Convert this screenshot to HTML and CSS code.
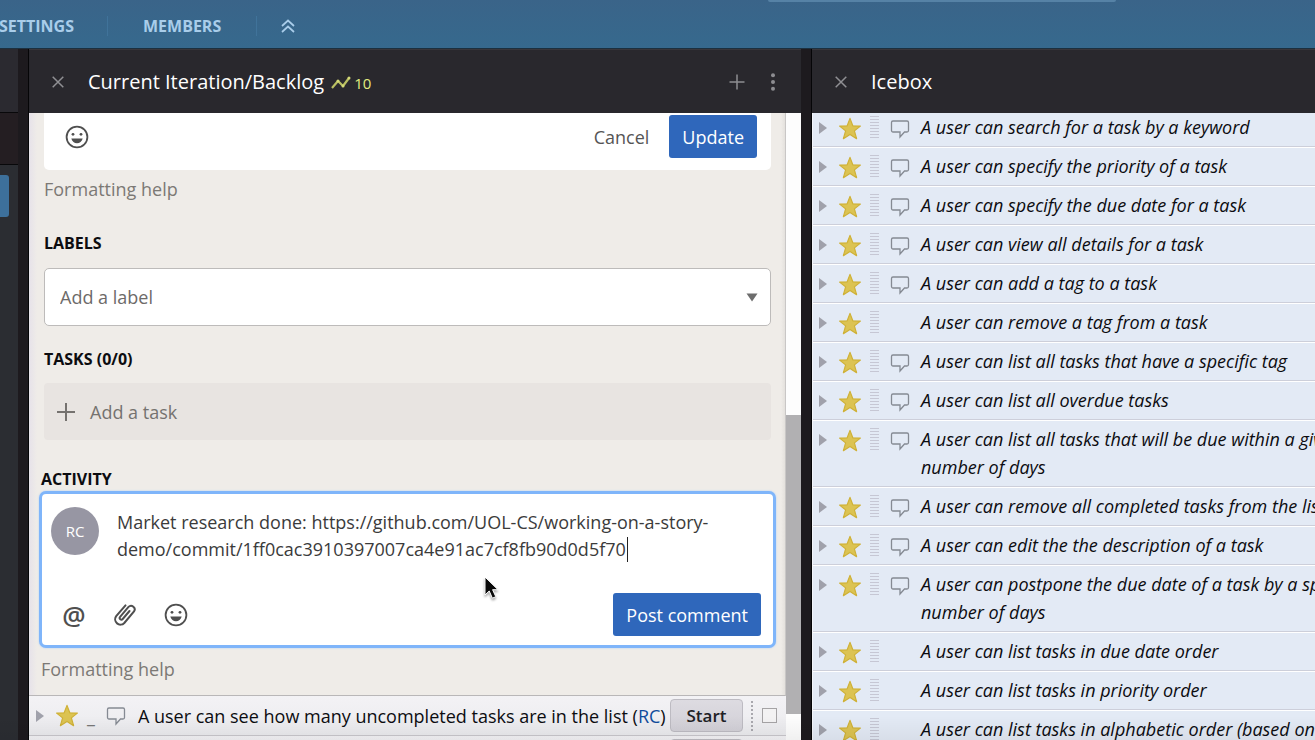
FILE: index.html
```html
<!DOCTYPE html>
<html lang="en">
<head>
<meta charset="utf-8">
<title>Current Iteration/Backlog</title>
<link rel="stylesheet" href="styles.css">
</head>
<body>
<svg class="defs" aria-hidden="true">
  <symbol id="star" viewBox="0 0 24 24"><path d="M12 1.400l2.800 7.400 7.600.300-6 4.800 2.200 7.800-6.600-4.300-6.600 4.300 2.200-7.800-6-4.800 7.600-.300z" fill="#dcc352" stroke="#cfb137" stroke-width="1.200" stroke-linejoin="round"/></symbol>
  <symbol id="bubble" viewBox="0 0 20 20"><path d="M3 2h14a1.500 1.500 0 0 1 1.500 1.500v8A1.500 1.500 0 0 1 17 13h-2.500L10 18v-5H3a1.500 1.500 0 0 1-1.500-1.500v-8A1.500 1.500 0 0 1 3 2z" fill="none" stroke="#858a93" stroke-width="1.300"/></symbol>
  <symbol id="caret" viewBox="0 0 8 12"><path d="M0 0l8 6-8 6z" fill="#a0a1ab"/></symbol>
  <symbol id="smile" viewBox="0 0 24 24"><circle cx="12" cy="12" r="10.400" fill="none" stroke="#4f4f4f" stroke-width="1.800"/><circle cx="8" cy="9.300" r="1.400" fill="#4f4f4f"/><circle cx="16" cy="9.300" r="1.400" fill="#4f4f4f"/><path d="M6.300 13.500h11.400c-.8 3-3 4.700-5.700 4.700s-4.900-1.700-5.700-4.700z" fill="#4f4f4f"/></symbol>
  <symbol id="close" viewBox="0 0 12 12"><path d="M.7.700l10.600 10.600M11.300.700L.7 11.300" stroke="#909094" stroke-width="1.500"/></symbol>
</svg>
<header class="topbar">
  <nav class="tabs">
    <a class="tab" href="#settings">SETTINGS</a>
    <a class="tab" href="#members">MEMBERS</a>
    <button class="collapse" aria-label="Collapse"><svg width="14" height="14" viewBox="0 0 14 14"><path d="M1 7l6-5.500L13 7M1 13l6-5.500 6 5.500" fill="none" stroke="#a9cdea" stroke-width="1.700"/></svg></button>
  </nav>
  <div class="search-edge"></div>
</header>
<main class="board">
  <aside class="sidebar">
    <div class="side-head"></div>
    <div class="side-sub"></div>
    <div class="side-body"><div class="side-active"></div></div>
  </aside>
  <section class="panel">
    <header class="panel-head">
      <button class="icon-btn" aria-label="Close panel"><svg width="12" height="12"><use href="#close"/></svg></button>
      <h2>Current Iteration/Backlog</h2>
      <span class="velocity"><svg width="20" height="14" viewBox="0 0 20 14"><path d="M1 12l6-7 5 5 6-8" fill="none" stroke="#b9bf62" stroke-width="2.200" stroke-linejoin="round"/><circle cx="7" cy="5" r="1.500" fill="#d3d977"/><circle cx="12" cy="10" r="1.500" fill="#d3d977"/><circle cx="18" cy="2" r="1.500" fill="#d3d977"/></svg>10</span>
      <span class="spacer"></span>
      <button class="icon-btn" aria-label="Add story"><svg width="16" height="16" viewBox="0 0 16 16"><path d="M8 0.500v15M.5 8h15" stroke="#8d8d91" stroke-width="1.500"/></svg></button>
      <button class="icon-btn menu" aria-label="Panel menu"><svg width="6" height="18" viewBox="0 0 6 18"><g fill="#8d8d91"><circle cx="3" cy="2.200" r="2"/><circle cx="3" cy="9" r="2"/><circle cx="3" cy="15.800" r="2"/></g></svg></button>
    </header>
    <div class="panel-body">
      <div class="scroll">
        <div class="detail">
          <div class="edit-foot">
            <button class="icon-btn" aria-label="Insert emoji"><svg width="24" height="24"><use href="#smile"/></svg></button>
            <span class="spacer"></span>
            <button class="plain">Cancel</button>
            <button class="primary">Update</button>
          </div>
          <a class="help" href="#help">Formatting help</a>
          <h3 id="labels-h">LABELS</h3>
          <div class="select-wrap">
            <select class="label-select" aria-labelledby="labels-h"><option>Add a label</option></select>
            <svg class="drop" width="12" height="9" viewBox="0 0 12 9"><path d="M.5.500h11L6 8.500z" fill="#6d6d6d"/></svg>
          </div>
          <h3>TASKS (0/0)</h3>
          <button class="add-task"><svg width="18" height="18" viewBox="0 0 18 18"><path d="M9 0v18M0 9h18" stroke="#75726f" stroke-width="2"/></svg>Add a task</button>
          <div class="activity">
            <h3 id="activity-h">ACTIVITY</h3>
            <div class="comment">
              <div class="comment-main">
                <span class="avatar">RC</span>
                <div class="entry">
                  <textarea rows="3" spellcheck="false" aria-labelledby="activity-h">Market research done: https://github.com/UOL-CS/working-on-a-story-demo/commit/1ff0cac3910397007ca4e91ac7cf8fb90d0d5f70</textarea>
                  <span class="text-caret"></span>
                </div>
              </div>
              <div class="comment-foot">
                <button class="icon-btn at" aria-label="Mention">@</button>
                <button class="icon-btn" aria-label="Attach file"><svg width="24" height="26" viewBox="0 0 24 26"><path d="M16.500 9l-6.800 8a1.700 1.700 0 0 1-2.600-2.200l8.400-9.900a3.600 3.600 0 0 1 5.500 4.600L11.300 21a5.300 5.300 0 0 1-8.100-6.800L12.500 3.400" fill="none" stroke="#4f4f4f" stroke-width="2" stroke-linecap="round"/></svg></button>
                <button class="icon-btn" aria-label="Insert emoji"><svg width="24" height="24"><use href="#smile"/></svg></button>
                <span class="spacer"></span>
                <button class="primary">Post comment</button>
              </div>
              <svg class="pointer" width="20" height="26" viewBox="0 0 20 26"><path d="M2 1v18l4.200-4 3.200 7.200 3.400-1.500-3.200-7H15z" fill="#0a0a0a" stroke="#fff" stroke-width="1"/></svg>
            </div>
            <a class="help" href="#help">Formatting help</a>
          </div>
        </div>
        <article class="story">
          <svg width="8" height="12"><use href="#caret"/></svg>
          <svg class="star" width="24" height="24"><use href="#star"/></svg>
          <span class="points">_</span>
          <svg class="bubble" width="20" height="20"><use href="#bubble"/></svg>
          <span class="story-title">A user can see how many uncompleted tasks are in the list (<a href="#rc">RC</a>)</span>
          <button class="start">Start</button>
          <span class="dots"></span>
          <input class="tick" type="checkbox" aria-label="Select story">
        </article>
        <article class="story">
          <span class="spacer"></span>
          <button class="start last" aria-label="Start"></button>
        </article>
      </div>
      <div class="track"><div class="thumb"></div></div>
    </div>
  </section>
  <section class="panel">
    <header class="panel-head">
      <button class="icon-btn" aria-label="Close panel"><svg width="12" height="12"><use href="#close"/></svg></button>
      <h2>Icebox</h2>
    </header>
    <ul class="icebox" id="icebox"></ul>
  </section>
  <div class="shade"></div>
</main>
<script src="icebox.js"></script>
</body>
</html>
```
FILE: styles.css
```css
* { box-sizing: border-box; }
body {
  margin: 0;
  height: 100vh;
  display: flex;
  flex-direction: column;
  overflow: hidden;
  background: #1d1a1e;
  font: 18px/28px "Open Sans", sans-serif;
  color: #0c0c10;
}
button, select, textarea { font: inherit; color: inherit; border: 0; margin: 0; }
button { padding: 0; background: none; cursor: pointer; }
a { text-decoration: none; color: inherit; }
svg { display: block; flex: none; }
h2, h3, ul { margin: 0; padding: 0; font-weight: 400; }
.defs { position: absolute; width: 0; height: 0; }
.spacer { flex: 1; }

.topbar {
  height: 49px;
  flex: none;
  display: flex;
  justify-content: space-between;
  background: linear-gradient(#3a6489, #36698d);
  border-bottom: 1px solid #1c303f;
}
.tabs { display: flex; align-items: center; padding-top: 4px; }
.tab {
  padding: 0 35px;
  line-height: 20px;
  font-size: 16px;
  font-weight: 700;
  color: #a9cdea;
  border-right: 1px solid #40739a;
}
.tab:first-child { padding: 0 33px 0 0; margin-left: -1px; }
.collapse { padding: 0 24px; }
.search-edge {
  width: 348px;
  height: 2px;
  margin-right: 199px;
  border-radius: 0 0 4px 4px;
  background: #5682a6;
}

.board {
  position: relative;
  flex: 1;
  min-height: 0;
  display: grid;
  grid-template-columns: 18px minmax(0, 773fr) minmax(0, 504fr);
  column-gap: 10px;
}
.sidebar { display: flex; flex-direction: column; }
.side-head { height: 63px; background: #2b2a30; }
.side-sub { height: 53px; background: #241e22; border: solid #08080a; border-width: 1px 0; }
.side-body { flex: 1; padding-top: 10px; background: #2b2d32; }
.side-active { width: 9px; height: 42px; background: #3d709b; border-radius: 0 3px 3px 0; }

.panel {
  display: flex;
  flex-direction: column;
  min-width: 0;
  min-height: 0;
  overflow: hidden;
  border-left: 1px solid #050507;
}
.panel-head {
  position: relative;
  z-index: 1;
  height: 64px;
  flex: none;
  display: flex;
  align-items: center;
  padding: 0 25px 0 23px;
  background: #29282d;
  border-top: 1px solid #39363a;
}
.panel-head h2 { margin-left: 24px; font-size: 20px; color: #fff; white-space: nowrap; }
.velocity { display: flex; align-items: center; gap: 3px; margin: 3px 0 0 7px; font-size: 15px; color: #e3ee80; }
.icon-btn { display: flex; align-items: center; justify-content: center; }
.menu { margin-left: 25px; }

.panel-body { flex: 1; min-height: 0; display: flex; }
.scroll { flex: 1; min-width: 0; overflow: hidden; background: #ebebee; }
.detail {
  padding: 0 14px 12px 15px;
  background: linear-gradient(90deg, #e6e2e9, #efece8 8px, #efece8 calc(100% - 4px), #e4e1dd);
  border-bottom: 1px solid #b9b7b8;
  border-right: 1px solid #c9c7c6;
}
.edit-foot {
  display: flex;
  align-items: center;
  height: 57px;
  padding: 0 14px 10px 21px;
  background: #fff;
  border-radius: 0 0 5px 5px;
}
.plain { color: #555; padding-right: 20px; }
.primary {
  height: 43px;
  padding: 0 13px;
  color: #fff;
  background: #2f67bb;
  border-radius: 3px;
  white-space: nowrap;
}
.help { display: block; margin-top: 5px; color: #7c7975; }
.detail h3 { font-size: 16px; line-height: 20px; font-weight: 700; }
.help + h3 { margin: 30px 0 15px; }
.select-wrap { position: relative; margin-bottom: 23px; }
.label-select {
  display: block;
  width: 100%;
  height: 58px;
  padding: 0 15px;
  appearance: none;
  color: #6d6a69;
  background: #fff;
  border: 1px solid #bdbbba;
  border-radius: 5px;
}
.drop { position: absolute; right: 13px; top: 25px; }
.add-task {
  display: flex;
  align-items: center;
  gap: 15px;
  width: 100%;
  height: 57px;
  margin-top: 14px;
  padding-left: 13px;
  color: #75726f;
  background: #e8e4e1;
  border-radius: 4px;
}
.activity { margin: 29px -5px 0; }
.activity .help { margin-left: 2px; margin-top: 7px; }
.activity h3 { margin-left: 2px; }
.comment {
  position: relative;
  margin-top: 2px;
  padding: 13px 12px 9px 9px;
  background: #fff;
  border: 3px solid #7fb5fa;
  border-radius: 7px;
  box-shadow: 0 0 2px #a9cdfb;
}
.comment-main { display: flex; gap: 18px; }
.avatar {
  flex: none;
  width: 48px;
  height: 48px;
  border-radius: 50%;
  background: #9796a3;
  color: #fff;
  font-size: 15px;
  line-height: 48px;
  text-align: center;
}
.entry { position: relative; flex: 1; padding-right: 10px; }
.entry textarea {
  display: block;
  width: 100%;
  height: 82px;
  padding: 2px 0 0;
  resize: none;
  outline: 0;
  overflow: hidden;
  background: none;
  color: #3b3b3b;
  line-height: 27px;
}
.text-caret { position: absolute; left: 510px; top: 30px; width: 1px; height: 25px; background: #222; }
.comment-foot { display: flex; align-items: center; gap: 27px; margin-top: 4px; padding-left: 11px; }
.at { width: 24px; font-size: 26px; font-weight: 600; color: #4f4f4f; }
.pointer { position: absolute; left: 441px; top: 82px; filter: drop-shadow(0 2px 1px #0005); }

.story {
  display: flex;
  align-items: center;
  height: 40px;
  padding: 0 9px 0 7px;
  background: linear-gradient(#f3f2f5, #ebebee);
  border-bottom: 1px solid #c9c7cc;
}
.story .star { margin-left: 11px; }
.points { margin-left: 8px; color: #777; }
.story .bubble { margin-left: 11px; }
.story-title { flex: 1; margin-left: 12px; white-space: nowrap; }
.story-title a { color: #0f4c9c; }
.start {
  width: 73px;
  height: 33px;
  flex: none;
  font-size: 17px;
  font-weight: 600;
  color: #202024;
  background: linear-gradient(#dddbe1, #d2d0d7);
  border: 1px solid #bdbbc2;
  border-radius: 4px;
}
.start.last { margin-right: 34px; }
.dots { height: 30px; margin: 0 9px 0 8px; border-left: 2px dotted #a9a8ae; }
.tick { appearance: none; width: 15px; height: 15px; margin: 0; border: 1px solid #a5a3a5; background: #f3f2f3; }
.track { width: 15px; display: grid; grid-template-rows: 302fr 299fr 26fr; background: #fdfdfd; }
.thumb { grid-row: 2; background: #b1b0b2; }

.icebox { flex: 1; min-height: 0; margin-top: -5px; list-style: none; background: #e3eaf5; border-left: 1px solid #f3f5fa; }
.item {
  display: flex;
  align-items: flex-start;
  padding: 5px 0 5px 6px;
  border-bottom: 1px solid #cdcfda;
  box-shadow: inset 0 1px #fff;
  font-style: italic;
}
.item .tri { margin-top: 9px; }
.item .star { margin: 4px 0 0 11px; }
.grip { flex: none; width: 9px; height: 23px; margin: 3px 0 0 8px; background: repeating-linear-gradient(#c6c7d4 0 1px, transparent 1px 3px); }
.item .bubble { margin: 6px 0 0 11px; }
.item .hidden { visibility: hidden; }
.item-title { flex: 0 0 470px; margin-left: 11px; }
.shade {
  position: absolute;
  left: 0; right: 0; bottom: 0;
  height: 24px;
  background: linear-gradient(#0000, #0000000d);
  pointer-events: none;
}
```
FILE: icebox.js
```js
const stories = [
  ["A user can search for a task by a keyword", true],
  ["A user can specify the priority of a task", true],
  ["A user can specify the due date for a task", true],
  ["A user can view all details for a task", true],
  ["A user can add a tag to a task", true],
  ["A user can remove a tag from a task", false],
  ["A user can list all tasks that have a specific tag", true],
  ["A user can list all overdue tasks", true],
  ["A user can list all tasks that will be due within a given number of days", true],
  ["A user can remove all completed tasks from the list", true],
  ["A user can edit the the description of a task", true],
  ["A user can postpone the due date of a task by a specific number of days", true],
  ["A user can list tasks in due date order", false],
  ["A user can list tasks in priority order", false],
  ["A user can list tasks in alphabetic order (based on description)", false]
];
document.getElementById("icebox").innerHTML = stories.map(([title, commented]) => `
  <li class="item">
    <svg class="tri" width="8" height="12"><use href="#caret"/></svg>
    <svg class="star" width="24" height="24"><use href="#star"/></svg>
    <span class="grip"></span>
    <svg class="bubble${commented ? "" : " hidden"}" width="20" height="20"><use href="#bubble"/></svg>
    <span class="item-title">${title}</span>
  </li>`).join("");
```
